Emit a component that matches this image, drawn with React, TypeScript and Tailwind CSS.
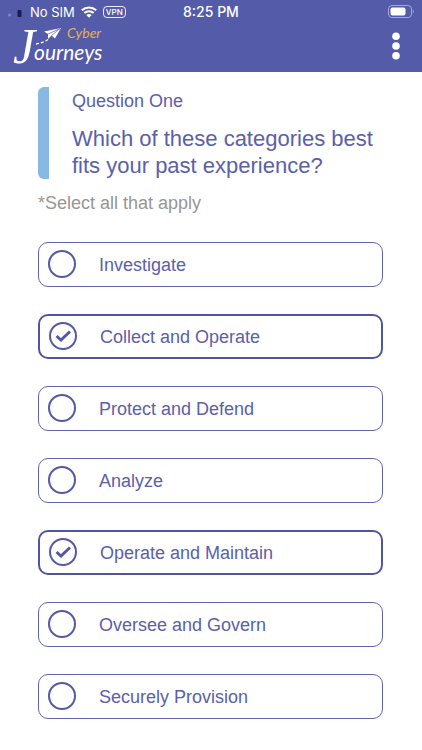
import { useState } from 'react';

const categories = [
  'Investigate',
  'Collect and Operate',
  'Protect and Defend',
  'Analyze',
  'Operate and Maintain',
  'Oversee and Govern',
  'Securely Provision',
];

function StatusBar() {
  return (
    <div className="grid h-6 grid-cols-3 items-center px-2 font-['Inter',sans-serif] text-sm text-white">
      <div className="flex items-center gap-1.5">
        <svg className="h-3 w-4 shrink-0" viewBox="0 0 16 12" aria-hidden="true">
          <circle cx="1.500" cy="9" r="1.500" fill="#8189cc" />
          <rect x="9.500" y="4" width="4" height="7" rx="1" fill="#1b1c55" />
        </svg>
        <span className="text-[13px] whitespace-nowrap">No SIM</span>
        <svg className="h-3 w-4 shrink-0" viewBox="0 0 16 12" fill="none" stroke="white" strokeWidth="2" aria-hidden="true">
          <path d="M.8 4.300C5 .4 11 .4 15.200 4.300" />
          <path d="M3.300 7C6 4.500 10 4.500 12.700 7" />
          <path d="M8 11.800 5.300 9.100Q8 7 10.700 9.100Z" fill="white" stroke="none" />
        </svg>
        <span className="rounded-sm border border-white/90 px-0.5 text-[8px] leading-[10px] font-medium">VPN</span>
      </div>
      <div className="text-center font-medium">8:25 PM</div>
      <svg className="h-3.5 w-7 justify-self-end" viewBox="0 0 28 14" fill="none" aria-hidden="true">
        <rect x="2.500" y=".5" width="23" height="12" rx="3.500" stroke="#a3a7d8" />
        <rect x="4.500" y="2.500" width="15" height="8" rx="2" fill="white" />
        <path d="M26.800 4.500v4q1-.5 1-2t-1-2" fill="#a3a7d8" />
      </svg>
    </div>
  );
}

function Logo() {
  return (
    <svg className="h-11 w-28 overflow-visible" viewBox="0 0 112 44" role="img" aria-label="Cyber Journeys">
      <text x="13" y="39" fill="white" fontFamily="'Liberation Serif', serif" fontStyle="italic" fontSize="50">
        J
      </text>
      <text x="34" y="36" fill="white" fontFamily="Lato, sans-serif" fontStyle="italic" fontSize="21">
        ourneys
      </text>
      <text x="67" y="14" fill="#e5b34f" fontFamily="Lato, sans-serif" fontStyle="italic" fontSize="14">
        Cyber
      </text>
      <path d="M36 20q7-1 13-5" fill="none" stroke="white" strokeWidth="1.300" strokeDasharray="3 2" />
      <path d="M44 7.500 61 4 55 14.500 51.500 11.500 48 15 48 10Z" fill="white" />
      <path d="M48 10 60 4.500 51.500 11.500" fill="none" stroke="#545ba8" strokeWidth=".7" />
    </svg>
  );
}

function Option({ label, checked, onChange }: { label: string; checked: boolean; onChange: () => void }) {
  return (
    <label
      className={
        checked
          ? 'flex h-[45px] items-center rounded-[10px] border-2 border-[#5055a0] px-[9px]'
          : 'flex h-[45px] items-center rounded-[10px] border border-[#6064ad] px-[9px]'
      }
    >
      <span className="grid shrink-0 pb-0.5">
        <input
          type="checkbox"
          checked={checked}
          onChange={onChange}
          className="col-start-1 row-start-1 size-7 appearance-none rounded-full border-[2px] border-[#5359a3]"
        />
        {checked && (
          <svg
            className="pointer-events-none col-start-1 row-start-1 size-7"
            viewBox="0 0 28 28"
            fill="none"
            stroke="#5359a3"
            strokeWidth="3"
            aria-hidden="true"
          >
            <path d="M7.500 14 12 18 21 9.500" />
          </svg>
        )}
      </span>
      <span className="ml-[23px] text-lg text-[#5a60ab]">{label}</span>
    </label>
  );
}

export default function App() {
  const [selected, setSelected] = useState(['Collect and Operate', 'Operate and Maintain']);

  const toggle = (name: string) =>
    setSelected(selected.includes(name) ? selected.filter((s) => s !== name) : [...selected, name]);

  return (
    <div className="min-h-screen bg-white font-['Liberation_Sans',sans-serif]">
      <header className="bg-[#545ba8]">
        <StatusBar />
        <div className="flex h-12 items-center justify-between pr-5 pb-1">
          <Logo />
          <button type="button" aria-label="Menu" className="px-0.5">
            <svg className="h-7 w-2" viewBox="0 0 8 28" fill="white" aria-hidden="true">
              <circle cx="4" cy="4.300" r="3.800" />
              <circle cx="4" cy="14" r="3.800" />
              <circle cx="4" cy="23.700" r="3.800" />
            </svg>
          </button>
        </div>
      </header>

      <main className="pt-[15px] pr-[39px] pb-8 pl-[38px]">
        {/* Question */}
        <section className="flex overflow-hidden rounded-md">
          <div className="w-[11px] shrink-0 bg-[#88b9e2]" />
          <div className="pl-[23px] text-[#5a60ab]">
            <h2 className="text-lg leading-7">Question One</h2>
            <h1 className="mt-2.5 text-[22px] leading-[27px]">Which of these categories best fits your past experience?</h1>
          </div>
        </section>
        <p className="mt-2.5 text-lg leading-7 text-[#969696]">*Select all that apply</p>

        {/* Answers */}
        <div className="mt-[25px] flex flex-col gap-[27px]">
          {categories.map((name) => (
            <Option key={name} label={name} checked={selected.includes(name)} onChange={() => toggle(name)} />
          ))}
        </div>
      </main>
    </div>
  );
}
